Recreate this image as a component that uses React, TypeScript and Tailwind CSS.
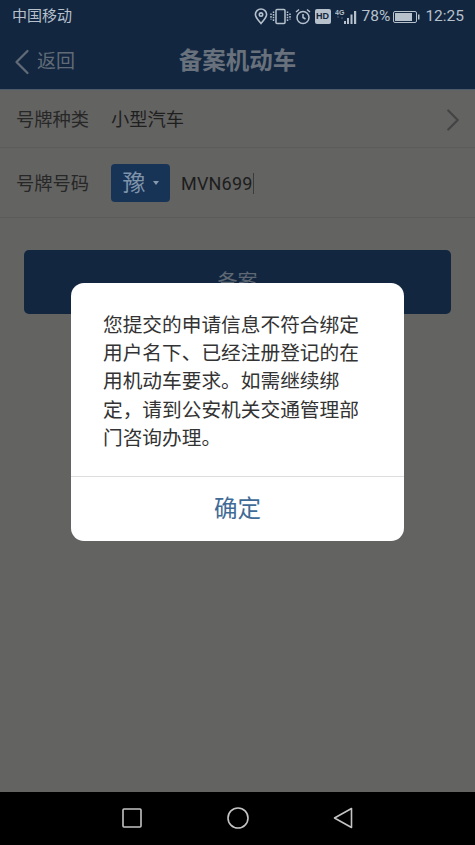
import React from 'react'
import { ChevronLeft, ChevronRight } from 'lucide-react'

const cjk = "font-['Liberation_Sans','Noto_Sans_CJK_SC',sans-serif]"

const StatusIcons = () => (
  <div className="flex items-center text-[#b7c1cc]">
    <svg width="14" height="17" viewBox="0 0 14 17" fill="none" stroke="currentColor" strokeWidth="1.600">
      <path d="M7 15.500C4.200 12.200 1.400 9.500 1.400 6.600a5.600 5.600 0 0 1 11.200 0C12.600 9.500 9.800 12.200 7 15.500Z" />
      <circle cx="7" cy="6.600" r="1.700" />
    </svg>
    <svg className="ml-[2px]" width="21" height="17" viewBox="0 0 21 17" fill="none" stroke="currentColor" strokeWidth="1.500">
      <rect x="6" y="1.500" width="9" height="14" rx="1" />
      <path d="M3.500 3.500v10M1 5.500v6M17.500 3.500v10M20 5.500v6" strokeDasharray="1.600 1" />
    </svg>
    <svg className="ml-[4px]" width="16" height="17" viewBox="0 0 16 17" fill="none" stroke="currentColor" strokeWidth="1.500">
      <circle cx="8" cy="9.500" r="6" />
      <path d="M8 6v3.500l2.500 1.500M1 4l3-2.500M15 4l-3-2.500" />
    </svg>
    <div className="ml-[4px] flex h-[15px] w-[16px] items-center justify-center rounded-[2px] bg-[#b7c1cc] font-['Liberation_Sans',sans-serif] text-[9px] font-bold text-[#122640]">
      HD
    </div>
    <svg className="ml-[4px]" width="24" height="18" viewBox="0 0 24 18" fill="currentColor">
      <text x="0" y="7" fontSize="7" fontWeight="700" fontFamily="Liberation Sans">4G</text>
      <path d="M2 9.500h2l-1-2zM6 9.500h2l-1 2z" opacity=".45" />
      <rect x="9" y="13" width="2" height="3" />
      <rect x="12" y="10" width="2" height="6" />
      <rect x="15.500" y="6.500" width="2" height="9.500" />
      <rect x="19" y="3" width="2.200" height="13" />
    </svg>
    <span className="ml-[3px] font-['Roboto',sans-serif] text-[15.500px]">78%</span>
    <svg className="ml-[3px]" width="27" height="14" viewBox="0 0 27 14">
      <rect x="0.500" y="1.500" width="23" height="11" rx="1.500" fill="none" stroke="currentColor" />
      <rect x="2" y="3" width="17" height="8" fill="currentColor" />
      <rect x="25" y="4.500" width="1.500" height="5" fill="currentColor" />
    </svg>
    <span className="ml-[5px] font-['Roboto',sans-serif] text-[15.500px]">12:25</span>
  </div>
)

export default function App() {
  return (
    <div className={`relative flex h-[845px] w-[475px] flex-col overflow-hidden bg-[#636362] ${cjk}`}>
      <header className="h-[90px] shrink-0 border-b border-[#4d5a6c] bg-[#122640]">
        <div className="flex h-[33px] items-center justify-between pl-[12px] pr-[11px]">
          <span className="text-[15px] text-[#b7c1cc]">中国移动</span>
          <StatusIcons />
        </div>
        <div className="grid h-[56px] grid-cols-[1fr_auto_1fr] items-center pt-[2px]">
          <div className="flex items-center text-[#616b77]">
            <ChevronLeft className="h-[44px] w-[44px]" strokeWidth={1.250} />
            <span className="ml-[-7px] text-[19px]">返回</span>
          </div>
          <h1 className="text-[23.500px] font-bold text-[#68717c]">备案机动车</h1>
        </div>
      </header>

      <div className="flex h-[58px] items-center border-b border-[#5c5c5b] pl-[16px] pr-[3px] pt-[3px]">
        <span className="w-[95px] text-[18.300px] text-[#272727]">号牌种类</span>
        <span className="flex-1 text-[18.300px] text-[#1f1f1f]">小型汽车</span>
        <ChevronRight className="h-[38px] w-[38px] text-[#444444]" strokeWidth={1.400} />
      </div>
      <div className="flex h-[70px] items-center border-b border-[#5c5c5b] pl-[16px] pt-px">
        <span className="mt-[2px] w-[95px] text-[18.300px] text-[#272727]">号牌号码</span>
        <div className="flex h-[38px] w-[59px] items-center justify-center gap-[7px] rounded-[4px] bg-[#173457] text-[#7f93aa]">
          <span className="text-[23px]">豫</span>
          <span className="h-0 w-0 border-x-[3.500px] border-t-[4px] border-x-transparent border-t-[#8899ad]" />
        </div>
        <span className="ml-[11px] font-['Roboto',sans-serif] text-[18px] tracking-[0.2px] text-[#1d1d1d]">MVN699</span>
        <span className="h-[21px] w-px bg-[#3b3b3b]" />
      </div>

      <div className="mx-[24px] mt-[32px] flex h-[64px] items-center justify-center rounded-[5px] bg-[#122640] text-[20px] text-[#5e6873]">
        备案
      </div>

      <nav className="mt-auto flex h-[53px] shrink-0 items-center justify-between bg-black pb-[2px] pl-[122px] pr-[122px] text-[#c4c4c4]">
        <svg width="20" height="20" viewBox="0 0 20 20" fill="none" stroke="currentColor" strokeWidth="1.600">
          <rect x="1" y="1" width="18" height="18" rx="1" />
        </svg>
        <svg width="22" height="22" viewBox="0 0 22 22" fill="none" stroke="currentColor" strokeWidth="1.600">
          <circle cx="11" cy="11" r="10" />
        </svg>
        <svg width="20" height="22" viewBox="0 0 20 22" fill="none" stroke="currentColor" strokeWidth="1.600" strokeLinejoin="round">
          <path d="M18.500 1.500v19L1.500 11Z" />
        </svg>
      </nav>

      <div className="absolute left-[71px] top-[283px] flex h-[258px] w-[333px] flex-col rounded-[13px] bg-white">
        <p className="h-[193px] pl-[32px] pr-[30px] pt-[28px] text-[19.700px] leading-[28.200px] text-[#333333]">
          您提交的申请信息不符合绑定用户名下、已经注册登记的在用机动车要求。如需继续绑定，请到公安机关交通管理部门咨询办理。
        </p>
        <button className="flex flex-1 items-center justify-center border-t border-[#dedede] pt-[2px] text-[23.500px] text-[#3f6b96]">
          确定
        </button>
      </div>
    </div>
  )
}
